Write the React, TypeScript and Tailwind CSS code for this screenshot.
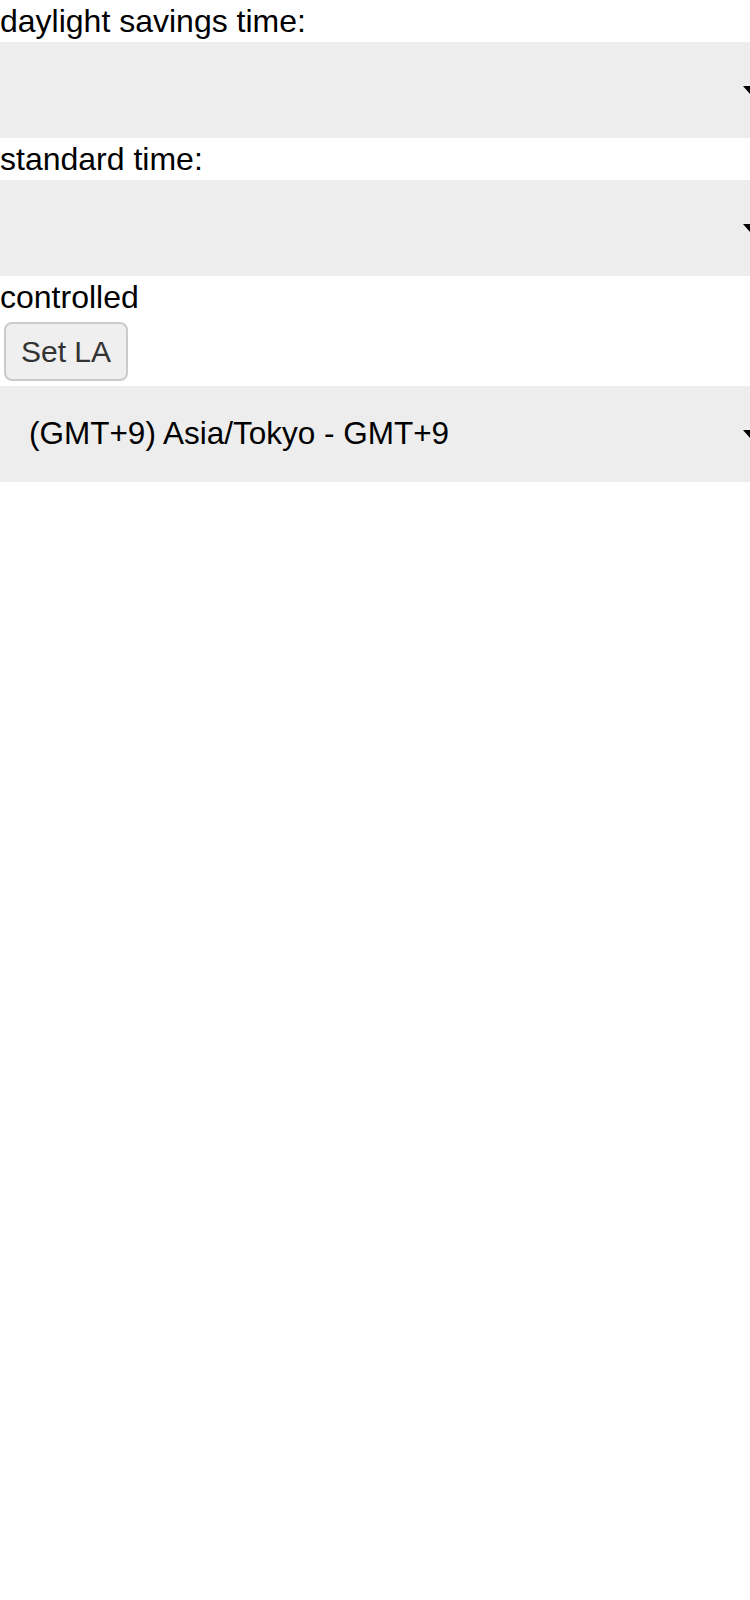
const font = "font-['Liberation_Sans',Arial,sans-serif]";

function Caret() {
  return (
    <svg width="14" height="8" viewBox="0 0 14 8" className="absolute right-[-7px] top-1/2 -translate-y-1/2">
      <polygon points="0,0 14,0 7,8" fill="#000" />
    </svg>
  );
}

function FakeSelect({ value }: { value?: string }) {
  return (
    <div className="relative h-[96px] w-full bg-[#ededed] flex items-center pl-[29px] text-[31.5px] text-black">
      {value && <span>{value}</span>}
      <Caret />
    </div>
  );
}

function Label({ children }: { children: string }) {
  return <div className="text-[32px] leading-[42px] h-[42px] whitespace-nowrap">{children}</div>;
}

export default function App() {
  return (
    <div className={`${font} w-[750px] overflow-hidden text-black`}>
      <Label>daylight savings time:</Label>
      <FakeSelect />
      <Label>standard time:</Label>
      <FakeSelect />
      <Label>controlled</Label>
      <div className="pt-[4px] pb-[5px] pl-[4px]">
        <button className="h-[59px] w-[124px] rounded-[8px] border-2 border-[#cbcbcb] bg-[#efefef] text-[30px] text-[#333]">
          Set LA
        </button>
      </div>
      <FakeSelect value="(GMT+9) Asia/Tokyo - GMT+9" />
    </div>
  );
}
